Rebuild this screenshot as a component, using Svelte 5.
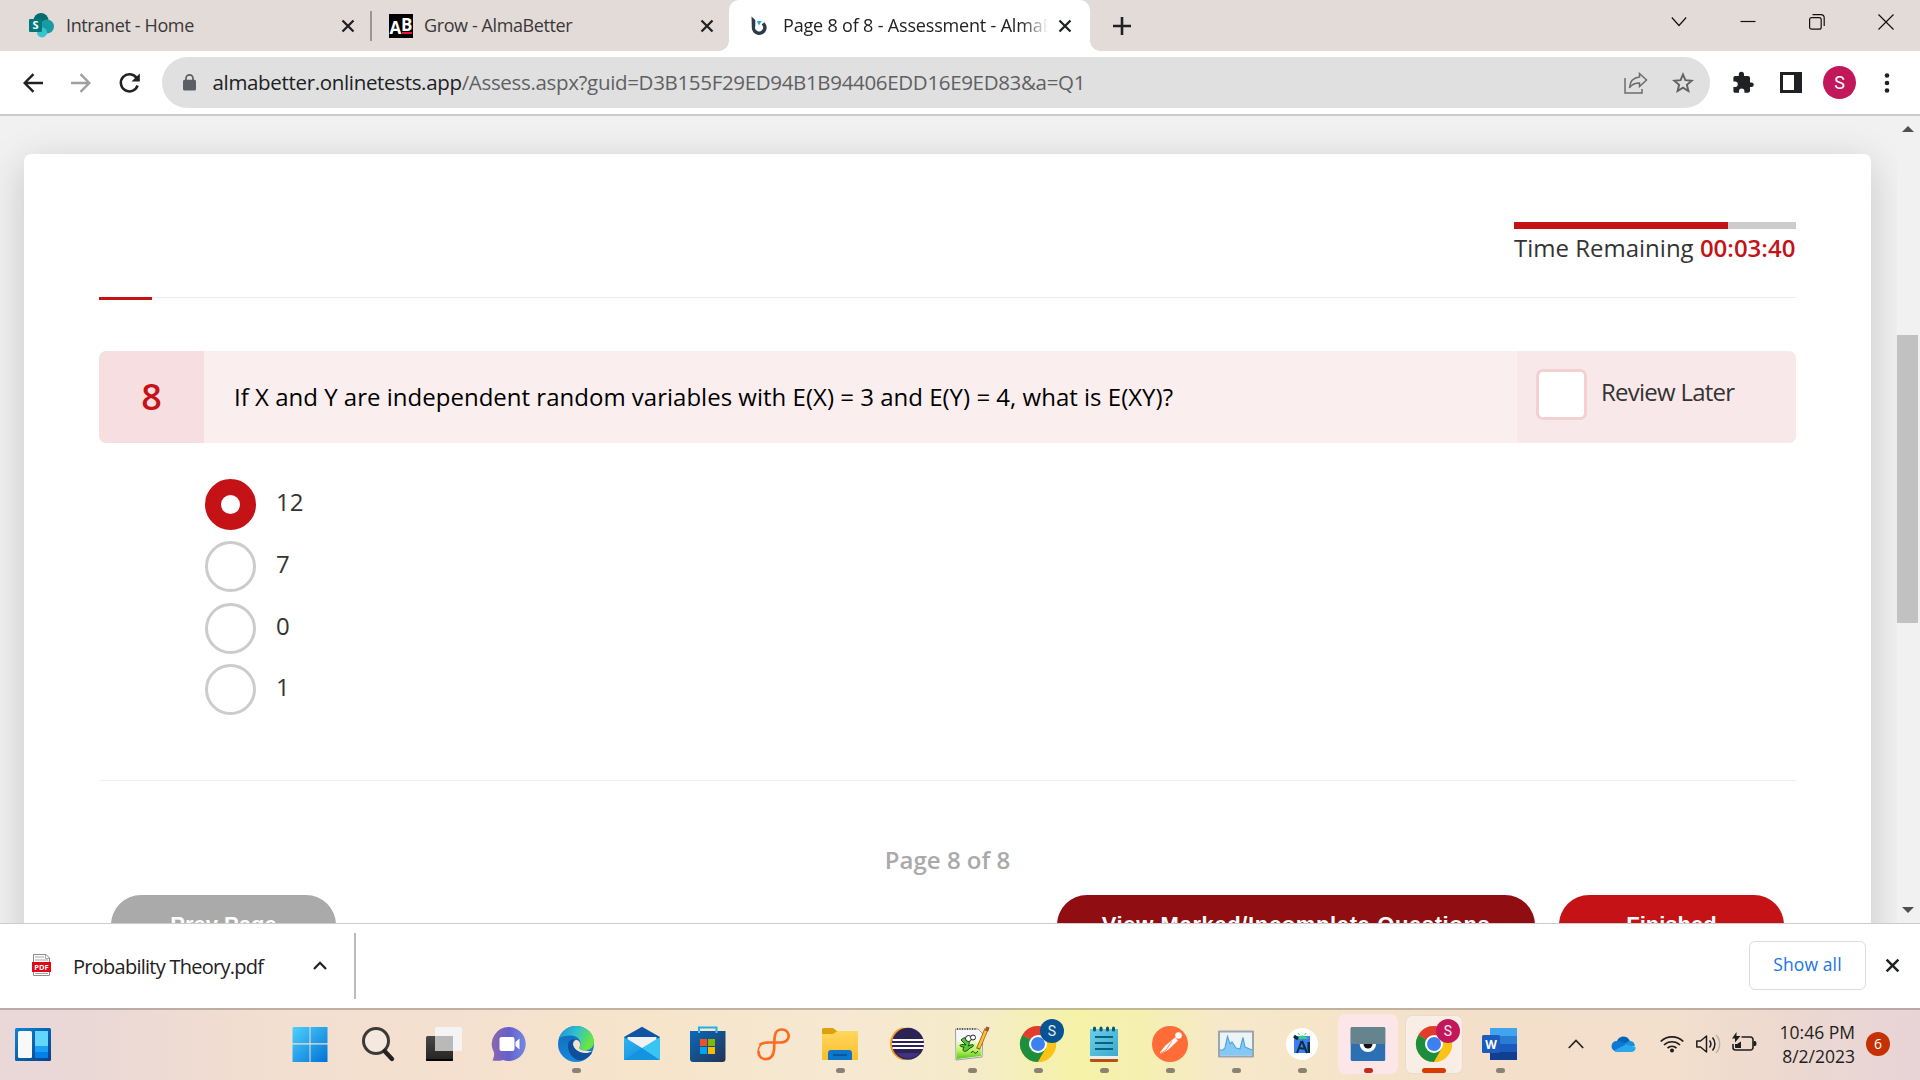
<script>
  const options = [
    { label: '12', checked: true },
    { label: '7', checked: false },
    { label: '0', checked: false },
    { label: '1', checked: false }
  ];
</script>

{#snippet cross(size)}
  <svg class="cross" width={size} height={size} viewBox="0 0 14 14"><path d="M1.5 1.5 12.5 12.5M12.5 1.5 1.5 12.5" /></svg>
{/snippet}

{#snippet chrome(letter, kind)}
  <svg class="app" viewBox="0 0 36 36">
    <circle cx="18" cy="18" r="18" fill="#fbbc05" />
    <path d="M18 18 2.4 9A18 18 0 0 1 33.6 9Z" fill="#e33b2e" />
    <path d="M18 18 2.4 9A18 18 0 0 0 18 36L25.8 22.5Z" fill="#1e8e3e" />
    <path d="M18 9H33.6A18 18 0 0 1 18 36L25.8 22.5Z" fill="#fcc314" />
    <circle cx="18" cy="18" r="9" fill="#fff" />
    <circle cx="18" cy="18" r="7" fill="#3b82f0" />
    <circle class={kind} cx="32" cy="5" r="12" />
    <text class="badge-letter" x="32" y="10" text-anchor="middle">{letter}</text>
  </svg>
{/snippet}

<div class="screen">
  <header class="tabs">
    <div class="tab first">
      <svg width="25" height="25" viewBox="0 0 25 25">
        <circle cx="12" cy="7.5" r="7.5" fill="#036c70" />
        <circle cx="18" cy="13.5" r="7" fill="#1a9ba1" />
        <circle cx="13" cy="19.5" r="5" fill="#37c6d0" />
        <rect y="6" width="13" height="13" rx="1" fill="#03787c" />
        <text class="sp" x="3.4" y="16.2">S</text>
      </svg>
      <span class="tab-title t1">Intranet - Home</span>
      {@render cross(14)}
    </div>
    <div class="tab second">
      <svg width="24" height="24" viewBox="0 0 24 24">
        <rect width="24" height="24" fill="#000" />
        <text class="ab" x="0.5" y="20">A</text>
        <text class="ab" x="12" y="16.5">B</text>
        <rect x="13" y="18" width="10" height="2" fill="#e5173f" />
      </svg>
      <span class="tab-title t2">Grow - AlmaBetter</span>
      {@render cross(14)}
    </div>
    <div class="tab active">
      <svg width="16" height="19" viewBox="0 0 16 19">
        <path d="M.5.5 4.3 4v6a4 4 0 1 0 6.4-1.6l2.6-2.2A7.4 7.4 0 1 1 .8 11.5Z" fill="#2d3a4a" />
        <path d="M5.8 5h4.8L8 9.5Z" fill="#1ba7e8" />
      </svg>
      <span class="tab-title t3">Page 8 of 8 - Assessment - AlmaBetter</span>
      {@render cross(14)}
    </div>
    <svg class="plus" width="18" height="18" viewBox="0 0 18 18"><path d="M9 0V18M0 9H18" stroke="#1f2124" stroke-width="2.6" /></svg>
    <div class="window-controls">
      <svg width="16" height="16" viewBox="0 0 16 16"><path d="M.8 3.5 8 11.5 15.2 3.5" /></svg>
      <svg width="16" height="16" viewBox="0 0 16 16"><path d="M.5 7.5H15.5" /></svg>
      <svg width="16" height="16" viewBox="0 0 16 16"><rect x=".6" y="3.6" width="11.6" height="11.6" rx="2" /><path d="M3.5.6H12a3.2 3.2 0 0 1 3.2 3.2V12" /></svg>
      <svg width="16" height="16" viewBox="0 0 16 16"><path d="M.5.5 15.5 15.5M15.5.5.5 15.5" /></svg>
    </div>
  </header>

  <nav class="toolbar">
    <div class="nav-icons">
      <svg width="20" height="20" viewBox="0 0 20 20"><path d="M20 10H2M10.5 1.2 1.7 10l8.8 8.8" fill="none" stroke="#1f2124" stroke-width="2.4" /></svg>
      <svg width="20" height="20" viewBox="0 0 20 20"><path d="M0 10H18M9.5 1.2 18.3 10l-8.8 8.8" fill="none" stroke="#a0a0a0" stroke-width="2.4" /></svg>
      <svg width="21" height="20" viewBox="0 0 21 20"><path d="M17.6 5A8.6 8.6 0 1 0 18.6 12.5" fill="none" stroke="#1f2124" stroke-width="2.5" /><path d="M20.8.5V8.5H12.5Z" fill="#1f2124" /></svg>
    </div>
    <div class="omnibox">
      <svg width="13" height="17" viewBox="0 0 13 17"><rect y="5.8" width="13" height="10.7" rx="1.5" fill="#5b5e62" /><path d="M3 6.5V4.3a3.5 3.5 0 0 1 7 0V6.5" fill="none" stroke="#5b5e62" stroke-width="1.7" /></svg>
      <span class="url"><b>almabetter.onlinetests.app</b>/Assess.aspx?guid=D3B155F29ED94B1B94406EDD16E9ED83&amp;a=Q1</span>
      <svg class="share" width="24" height="22" viewBox="0 0 24 22"><path d="M1 6V21H18V17M15.5 1.5 22.5 8 15.5 14.5V11C10.5 11 7.5 12.5 5.5 16 6 9.5 9.5 5.5 15.5 5Z" fill="none" stroke="#6a6c6e" stroke-width="1.5" /></svg>
      <svg class="star" width="22" height="22" viewBox="0 0 22 22"><path d="M11 2.5 13.4 8.1 19.7 8.7 14.9 12.8 16.4 19 11 15.7 5.6 19 7.1 12.8 2.3 8.7 8.6 8.1Z" fill="none" stroke="#5f6164" stroke-width="1.9" /></svg>
    </div>
    <div class="actions">
      <svg width="22" height="22" viewBox="0 0 22 22"><path d="M18.5 11H17V6.5c0-1.1-.9-2-2-2H11V3a2.6 2.6 0 0 0-5.2 0V4.5H2.2C1.1 4.5.4 5.3.4 6.4V10H2a2.8 2.8 0 0 1 0 5.6H.4V19.5c0 1 .8 1.8 1.8 1.8H6V19.8a2.7 2.7 0 0 1 5.4 0V21.3H15c1.1 0 2-.8 2-1.9V15.5h1.5a2.25 2.25 0 0 0 0-4.5Z" fill="#1f2124" transform="translate(0 -.6)" /></svg>
      <svg width="22" height="21" viewBox="0 0 22 21"><path d="M0 0H22V21H0ZM3 3V18H14V3Z" fill="#1f2124" fill-rule="evenodd" /></svg>
      <span class="avatar">S</span>
      <svg width="6" height="22" viewBox="0 0 6 22"><g fill="#1f2124"><circle cx="3" cy="3.5" r="2.3" /><circle cx="3" cy="11" r="2.3" /><circle cx="3" cy="18.5" r="2.3" /></g></svg>
    </div>
  </nav>

  <main class="page">
    <section class="card">
      <div class="timer">
        <div class="timer-bar"><i></i></div>
        <div class="timer-text">Time Remaining <b>00:03:40</b></div>
      </div>
      <div class="rule"><i></i></div>
      <div class="question">
        <div class="number">8</div>
        <div class="prompt"><span>If X and Y are independent random variables with E(X) = 3 and E(Y) = 4, what is E(XY)?</span></div>
        <div class="review"><i></i><span>Review Later</span></div>
      </div>
      <div class="options">
        {#each options as option}
          <div class="option"><i class:checked={option.checked}></i><span>{option.label}</span></div>
        {/each}
      </div>
      <div class="rule bottom"></div>
      <div class="pager">Page 8 of 8</div>
      <div class="buttons">
        <div class="button gray"><span>Prev Page</span></div>
        <div class="button dark"><span>View Marked/Incomplete Questions</span></div>
        <div class="button red"><span>Finished</span></div>
      </div>
    </section>
    <aside class="scrollbar">
      <svg width="12" height="6" viewBox="0 0 12 6"><path d="M0 6 6 0 12 6Z" fill="#505050" /></svg>
      <div class="thumb"></div>
      <svg width="12" height="6" viewBox="0 0 12 6"><path d="M0 0H12L6 6Z" fill="#505050" /></svg>
    </aside>
  </main>

  <section class="downloads">
    <svg class="pdf" width="19" height="22" viewBox="0 0 19 22">
      <path d="M1.5.5H14L17.5 4V21.5H1.5Z" fill="#fff" stroke="#8b8b8b" />
      <path d="M3 3H12M3 6H16M3 19.5H16M13.5 1V4.5H17" stroke="#a5a5a5" fill="none" />
      <rect y="8" width="19" height="10" fill="#e30613" />
      <text x="2.3" y="15.7">PDF</text>
    </svg>
    <span class="file">Probability Theory.pdf</span>
    <svg class="caret" width="14" height="9" viewBox="0 0 14 9"><path d="M1 8 7 1.8 13 8" fill="none" stroke="#1f2124" stroke-width="2.2" /></svg>
    <i class="divider"></i>
    <div class="show-all">Show all</div>
    {@render cross(15)}
  </section>

  <footer class="taskbar">
    <svg class="widgets" width="36" height="33" viewBox="0 0 36 33">
      <defs>
        <linearGradient id="wg" x1="0" y1="0" x2="1" y2="1"><stop stop-color="#0a84dc" /><stop offset="1" stop-color="#0c3f86" /></linearGradient>
        <linearGradient id="win" x1="0" y1="0" x2="1" y2="1"><stop stop-color="#4fd0ff" /><stop offset="1" stop-color="#0072d4" /></linearGradient>
        <linearGradient id="dk" x1="0" y1="0" x2="0" y2="1"><stop stop-color="#494848" /><stop offset="1" stop-color="#242322" /></linearGradient>
        <linearGradient id="ch" x1="0" y1="0" x2="1" y2="0"><stop stop-color="#8b67ad" /><stop offset=".5" stop-color="#6460cc" /><stop offset="1" stop-color="#7488e4" /></linearGradient>
        <linearGradient id="ed" x1="0" y1="0" x2="1" y2=".4"><stop stop-color="#1b8fd8" /><stop offset=".5" stop-color="#30bfd0" /><stop offset="1" stop-color="#6be542" /></linearGradient>
        <linearGradient id="eb" x1="0" y1="0" x2="0" y2="1"><stop stop-color="#1268b4" /><stop offset="1" stop-color="#1588e0" /></linearGradient>
        <linearGradient id="st" x1="0" y1="0" x2="1" y2="1"><stop stop-color="#0a6abb" /><stop offset="1" stop-color="#243355" /></linearGradient>
        <linearGradient id="ml" x1="0" y1="0" x2="1" y2="1"><stop stop-color="#31b4f0" /><stop offset="1" stop-color="#0f86dc" /></linearGradient>
        <linearGradient id="fo" x1="0" y1="0" x2="0" y2="1"><stop stop-color="#ffd75e" /><stop offset="1" stop-color="#fcbd2c" /></linearGradient>
        <linearGradient id="np" x1="0" y1="0" x2="1" y2="1"><stop stop-color="#6ccfe8" /><stop offset="1" stop-color="#38a9cd" /></linearGradient>
        <linearGradient id="gr" x1="0" y1="0" x2="0" y2="1"><stop stop-color="#f5ffe0" /><stop offset=".55" stop-color="#bdf060" /><stop offset="1" stop-color="#4fc71b" /></linearGradient>
      </defs>
      <rect width="36" height="33" rx="1.5" fill="url(#wg)" />
      <rect x="3" y="3" width="14" height="27" rx="1.5" fill="#f8f8f8" />
      <path d="M20 3H33V18H20Z" fill="#62d6fc" /><path d="M20 18H33V24H20Z" fill="#18a0f8" /><path d="M20 24H33V30H20Z" fill="#0680e8" />
    </svg>

    <div class="apps">
      <div class="cell"><svg class="app" viewBox="0 0 36 36"><path d="M1.5 1H17.5V17.3H.5V2ZM18.5 1H35.5V17.3H18.5ZM.5 18.5H17.5V36H.5ZM18.5 18.5H35.5V36H18.5Z" fill="url(#win)" /></svg></div>
      <div class="cell"><svg class="app" viewBox="0 0 36 36"><circle cx="18" cy="15" r="12.5" fill="#f5e8df" stroke="#3a3a3a" stroke-width="3" /><path d="M26.5 25 34 33" stroke="#222" stroke-width="4.4" stroke-linecap="round" /></svg></div>
      <div class="cell"><svg class="app" viewBox="0 0 36 36"><rect y="10" width="27" height="25" rx="1.5" fill="url(#dk)" /><path d="M0 33H27V34a1 1 0 0 1-1 1H1a1 1 0 0 1-1-1Z" fill="#050505" /><rect x="9" y="1" width="27" height="24" rx="1.5" fill="#f4f4f4" /><path d="M9 10H27V25H9Z" fill="#b9b9b9" /></svg></div>
      <div class="cell"><svg class="app" viewBox="0 0 36 36"><path d="M17.5 1A17 17 0 1 1 11 34C8 35 4 35 .5 34.5 2 31 2.5 29 1.8 26A17 17 0 0 1 17.5 1Z" fill="url(#ch)" /><rect x="7.5" y="11" width="15" height="14" rx="2" fill="#fff" /><path d="M23.5 16 27.5 12.5V23.5L23.5 20Z" fill="#fff" /></svg></div>
      <div class="cell"><svg class="app" viewBox="0 0 36 36"><circle cx="18" cy="18" r="18" fill="url(#eb)" /><path d="M1 12C4 4 11 0 18 0 28 0 36 7 36 15.5 36 21 32 24.5 27 24.5 23 24.5 20.5 23 21.5 21 24 17 22 10 13 9.5 8 9.3 4 10.5 1 12Z" fill="url(#ed)" /><path d="M10 20C10 28 16 34 22 34.5 27 34 31 31 33.8 27 34 26.5 33.5 26 33 26.3 27 29 17 26 15 19 14 15.5 16 13.5 17 13 12 13 10 16 10 20Z" fill="#104f9b" /><path d="M15 19C15 15 17.5 13.5 19 14 22 15.5 23 18 21.5 21 20.5 23 23 24.5 27 24.5L33.8 25.5C27 29 17 26 15 19Z" fill="#f5e3cf" /><path d="M15 19C16 25 24 29 33 26.5L31 30C24 35 11 29 12 17Z" fill="#104f9b" /></svg><i class="dot"></i></div>
      <div class="cell"><svg class="app" viewBox="0 0 36 36"><path d="M0 11 18 .8 36 11V20H0Z" fill="#0e56a5" /><path d="M3.5 11H32.5V20L18 26 3.5 20Z" fill="#f1f1f3" /><path d="M0 11 18 22 36 34H0Z" fill="url(#ml)" /><path d="M36 11 18 22 36 34Z" fill="#38c5f4" /><path d="M0 34 18 22 36 34Z" fill="#1394e0" /></svg></div>
      <div class="cell"><svg class="app" viewBox="0 0 36 36"><path d="M9 7V1.5H26.5V7" fill="none" stroke="#1fb0ee" stroke-width="2" /><path d="M0 5H35.5V33a3 3 0 0 1-3 3H3a3 3 0 0 1-3-3Z" fill="url(#st)" /><path d="M9 5V7M26.5 5V7" stroke="#4cc2f3" stroke-width="2" /><path d="M10 13H17V20H10Z" fill="#f25022" /><path d="M18 13H25V20H18Z" fill="#7fba00" /><path d="M10 21H17V28H10Z" fill="#00a4ef" /><path d="M18 21H25V28H18Z" fill="#ffb900" /></svg></div>
      <div class="cell"><svg class="app" viewBox="0 0 36 36"><path d="M3.5 19C6 17 9 16.5 12 16.5H24C30 16.5 33.5 13 32.5 8.5 31 2.5 21 1 19 9 18 14 18.5 19 18 24 17.5 30 14 33.5 9 33 4 33 2 28 3 25" fill="none" stroke="#fb6b20" stroke-width="2.7" /><path d="M12 16.5C5 16.5 1.5 21 2.5 27" fill="none" stroke="#fb6b20" stroke-width="1.5" /></svg></div>
      <div class="cell"><svg class="app" viewBox="0 0 36 36"><path d="M0 3.5Q0 2 1.5 2H11L15 5H36V14H0Z" fill="#dda10d" /><path d="M0 8H11L15.5 5H36V34H0Z" fill="url(#fo)" /><path d="M6 34V27a3 3 0 0 1 3-3H27a3 3 0 0 1 3 3V34Z" fill="#0b77c9" /><path d="M11 29H25" stroke="#0a4c8c" stroke-width="1.5" /></svg><i class="dot"></i></div>
      <div class="cell"><svg class="app" viewBox="0 0 36 36"><path d="M14 1.5A17 17 0 0 0 14 34L17 34A20 20 0 0 1 17 2Z" fill="#f7982a" /><circle cx="20" cy="17.8" r="16" fill="#2c2255" /><path d="M8 27a16 16 0 0 0 24 0Z" fill="#42327b" /><path d="M4.5 14H35.5M4 18H36M4.5 22H35.5" stroke="#fff" stroke-width="2.2" /></svg></div>
      <div class="cell"><svg class="app" viewBox="0 0 36 36"><path d="M1.5 3H24L29 8 28 31 2 34Z" fill="#f8f8fa" stroke="#888" stroke-width=".8" /><path d="M3 3H22" stroke="#555" stroke-width="2" stroke-dasharray="1 1.5" /><path d="M2.5 16 27.5 14 27 30 2.5 33Z" fill="url(#gr)" /><path d="M7 14C12 8 18 16 14 20 20 17 22 20 16 22 12 27 7 26 10 21 4 21 5 17 12 19Z" fill="#55c936" stroke="#12470d" stroke-width="1" /><circle cx="14.5" cy="12.5" r="3" fill="#fff" stroke="#222" /><circle cx="19" cy="11.5" r="2.5" fill="#fff" stroke="#222" /><path d="M17 27C20 22 20 31 24 25" fill="none" stroke="#193b08" /><path d="M32.5 3 24 23" stroke="#8b5b10" stroke-width="4" /><path d="M32.5 3 24.5 22" stroke="#ffbd35" stroke-width="2.6" /><path d="M34 1 32.5 5" stroke="#ad4b48" stroke-width="3.5" /></svg><i class="dot"></i></div>
      <div class="cell">{@render chrome('S', 'blue-badge')}<i class="dot"></i></div>
      <div class="cell"><svg class="app" viewBox="0 0 36 36"><rect x="4" y="24" width="28" height="12" rx="1.5" fill="#b5520e" /><path d="M4 3H32V31H4Z" fill="url(#np)" /><path d="M4 30H32V33H4Z" fill="#e8eef0" /><path d="M8.5 2V4M15 2V4M21.5 2V4M27.5 2V4" stroke="#0c5470" stroke-width="3" stroke-linecap="round" /><path d="M9 11H27M9 17H27M9 23H27" stroke="#096182" stroke-width="1.8" /></svg><i class="dot"></i></div>
      <div class="cell"><svg class="app" viewBox="0 0 36 36"><circle cx="18" cy="18" r="18" fill="#ff6c37" /><circle cx="26.5" cy="9.5" r="3.3" fill="#fff" /><path d="M23 11.5 26 14.5 16 24 9 27.5 8 26.5 13 20Z" fill="#fff" /><path d="M20 15 14 24 9 27" stroke="#ff6c37" stroke-width=".8" fill="none" /></svg><i class="dot"></i></div>
      <div class="cell"><svg class="app" viewBox="0 0 36 36"><rect y="4.5" width="36" height="27" rx="1" fill="#9ba5ae" /><rect x="2" y="6.5" width="32" height="23" fill="#eef3f7" /><path d="M2 24H5L7 22 9 11 12 18 14 16 18 22 22 23 25 11 27 21 34 24V29.5H2Z" fill="#86c8f5" /><path d="M2 24H5L7 22 9.5 10.5 12 18 14 16 18 22 22 23 25 11.5 27 21 34 24" fill="none" stroke="#4ea7e0" stroke-width="1.2" /></svg><i class="dot"></i></div>
      <div class="cell"><svg class="app" viewBox="0 0 36 36"><circle cx="18" cy="18" r="16" fill="#fff" /><path d="M10 10H26V27H10Z" fill="#3f7df0" /><path d="M12.5 13A6 5 0 0 1 24 13Z" fill="#39cf7d" /><path d="M14 7 15.5 9M22 7 20.5 9" stroke="#39cf7d" /><path d="M10 10 14 13" stroke="#0c2737" stroke-width="3" /><path d="M17.5 15 13 27M18 15 23 27M15 22 22 23" stroke="#083042" stroke-width="2" /><rect x="23.5" y="16" width="2.5" height="11" fill="#083042" /></svg><i class="dot"></i></div>
      <div class="cell attention"><svg class="app" viewBox="0 0 36 36"><rect x=".7" y="1" width="34.5" height="34" rx="1.5" fill="#2c6fb5" /><path d="M.7 2.5Q.7 1 2.2 1H33.7Q35.2 1 35.2 2.5V18H.7Z" fill="#66848e" /><path d="M9.7 18A8.2 8 0 0 0 26.1 18Z" fill="#fff" /><path d="M13.5 18A4.5 4.5 0 0 0 22.5 18Z" fill="#151515" /></svg><i class="dot hot"></i></div>
      <div class="cell current">{@render chrome('S', 'pink-badge')}<i class="dot wide"></i></div>
      <div class="cell"><svg class="app" viewBox="0 0 36 36"><path d="M8 2H35V10H8Z" fill="#41a5ee" /><path d="M8 10H35V18H8Z" fill="#2b7cd3" /><path d="M8 18H35V26H8Z" fill="#185abd" /><path d="M8 26H35V34H8Z" fill="#103f91" /><rect y="9" width="18" height="18" rx="1.5" fill="#1b5cbe" /><text class="w" x="9" y="22.5" text-anchor="middle">W</text></svg><i class="dot"></i></div>
    </div>

    <div class="tray">
      <svg class="up" width="16" height="10" viewBox="0 0 16 10"><path d="M.8 9 8 1.5 15.2 9" fill="none" stroke="#222" stroke-width="1.7" /></svg>
      <svg class="cloud" width="24" height="16" viewBox="0 0 24 16"><path d="M5 5C7-.5 15-1.5 18 5L12 11 3 8Z" fill="#0364b8" /><path d="M4.5 15.5A5 5 0 0 1 5 5C9 4 12 7 15 9L8 15Z" fill="#0f78d4" /><path d="M16 5.5A5 5 0 0 1 22 7L23 10 15 11 12 8Z" fill="#1490df" /><path d="M2 14.5 14 8.5 23.5 11A4.5 4.5 0 0 1 20 16H5Q3 16 2 14.5Z" fill="#28a8ea" /></svg>
      <svg class="wifi" width="24" height="18" viewBox="0 0 24 18"><g fill="none" stroke="#1e1e1e" stroke-width="1.7"><path d="M.7 6.5A16 16 0 0 1 23.3 6.5" /><path d="M4 10A11.5 11.5 0 0 1 20 10" /><path d="M7.5 13A7 7 0 0 1 16.5 13" /></g><circle cx="12" cy="15.5" r="2" fill="#1e1e1e" /></svg>
      <svg class="volume" width="24" height="20" viewBox="0 0 24 20"><path d="M.8 7H4.5L10.5 2V18L4.5 13H.8Z" fill="none" stroke="#1e1e1e" stroke-width="1.5" stroke-linejoin="round" /><path d="M13.5 6.5A5.5 5.5 0 0 1 13.5 13.5M16.5 3.5A10 10 0 0 1 16.5 16.5" fill="none" stroke="#1e1e1e" stroke-width="1.5" /><path d="M20 1A13 13 0 0 1 20 19" fill="none" stroke="#b9b0a8" stroke-width="1.5" /></svg>
      <svg class="battery" width="25" height="20" viewBox="0 0 25 20"><path d="M9.5 5H18.5a2.5 2.5 0 0 1 2.5 2.5V15.5a2.5 2.5 0 0 1-2.5 2.5H3.5A2.5 2.5 0 0 1 1 15.5V12" fill="none" stroke="#1e1e1e" stroke-width="1.6" /><path d="M21.5 9H23Q24.5 9 24.5 11.5 24.5 14 23 14H21.5ZM3 15.5V12H5L9 9.5V16H3.5ZM4.5 0V4H8.5L3 10.5V6.5H0Z" fill="#1e1e1e" /></svg>
      <div class="clock"><span class="time">10:46 PM</span><span class="date">8/2/2023</span></div>
      <span class="count">6</span>
    </div>
  </footer>
</div>

<style>
  :global(body) { margin: 0; overflow: hidden; }
  .screen { width: 1920px; height: 1080px; display: flex; flex-direction: column; overflow: hidden; font-family: "Open Sans", "Noto Sans", sans-serif; background: #fff; color: #1f2124; box-sizing: border-box; }
  .screen * { box-sizing: border-box; }
  svg { display: block; flex: none; overflow: visible; }
  i { display: block; flex: none; }
  span { white-space: nowrap; }

  .tabs { height: 51px; flex: none; background: #e3dbd8; display: flex; align-items: center; }
  .tab { display: flex; align-items: center; height: 51px; flex: none; }
  .cross path { stroke: #1f2124; stroke-width: 2.3; fill: none; }
  .tab-title { font-size: 18px; color: #3a3838; flex: 1; line-height: 26px; padding-bottom: 2px; overflow: hidden; }
  .first { width: 372px; padding: 0 17px 0 29px; }
  .first::after { content: ""; width: 2px; height: 30px; background: #9c9693; margin: 0 -17px 0 15px; }
  .t1 { margin-left: 12px; letter-spacing: -0.37px; }
  .second { width: 357px; padding: 0 15px 0 17px; }
  .t2 { margin-left: 11px; letter-spacing: -0.4px; }
  .active { width: 361px; padding: 0 18px 0 22px; background: #fff; border-radius: 10px 10px 0 0; position: relative; }
  .active::before, .active::after { content: ""; position: absolute; bottom: 0; width: 10px; height: 10px; }
  .active::before { left: -10px; background: radial-gradient(circle at 0 0, transparent 9.5px, #fff 10px); }
  .active::after { right: -10px; background: radial-gradient(circle at 100% 0, transparent 9.5px, #fff 10px); }
  .t3 { margin: 0 10px 0 16px; color: #222; letter-spacing: -0.18px; -webkit-mask-image: linear-gradient(90deg, #000 calc(100% - 26px), transparent); mask-image: linear-gradient(90deg, #000 calc(100% - 26px), transparent); }
  .plus { margin-left: 23px; }
  .window-controls { margin: 0 26px 8px auto; display: flex; gap: 53px; }
  .window-controls path, .window-controls rect { fill: none; stroke: #111; stroke-width: 1.2; }
  .sp { font: 700 11px "Open Sans", sans-serif; fill: #fff; }
  .ab { font: 700 17px "Open Sans", sans-serif; fill: #fff; }

  .toolbar { height: 65px; flex: none; border-bottom: 2px solid #cbcbcb; display: flex; align-items: center; }
  .nav-icons { width: 162px; padding-left: 23px; display: flex; gap: 28px; flex: none; }
  .omnibox { width: 1548px; height: 51px; border-radius: 26px; background: #e0e0e0; display: flex; align-items: center; padding-left: 20.5px; flex: none; }
  .url { margin-left: 17px; padding-bottom: 2px; flex: 1; font-size: 20.5px; color: #5f6164; letter-spacing: -0.33px; }
  .url b { font-weight: 400; color: #202124; }
  .share { margin-right: 24px; }
  .star { margin-right: 16px; }
  .actions { display: flex; align-items: center; padding-left: 23px; flex: 1; }
  .actions > :nth-child(2) { margin-left: 25px; }
  .avatar { width: 33px; height: 33px; border-radius: 50%; background: #c2185b; color: #fff; font: 18px/33px Roboto, sans-serif; text-align: center; margin: 0 28px 0 21px; }

  .page { height: 807px; flex: none; background: #f1f1f1; display: flex; overflow: hidden; }
  .card { margin: 38px 0 0 24px; width: 1847px; height: 900px; flex: none; background: #fff; border-radius: 7px; box-shadow: 0 10px 40px rgba(0, 0, 0, .18); padding: 68px 75px 0; color: #333; font-size: 24px; line-height: 32px; }
  .timer { width: 282px; margin-left: auto; height: 75px; white-space: nowrap; }
  .timer-bar { height: 7px; background: #ccc; }
  .timer-bar i { width: 214px; height: 7px; background: #c41217; }
  .timer-text { margin-top: 3px; }
  .timer-text b { font-weight: 600; color: #c41217; }
  .rule { height: 1px; background: #ececec; }
  .rule i { width: 53px; height: 3px; background: #c41217; }
  .question { margin-top: 53px; height: 92px; display: flex; border-radius: 7px; overflow: hidden; }
  .number { width: 105px; background: #f7dee1; color: #c41217; font-size: 36px; font-weight: 600; text-align: center; line-height: 91px; }
  .prompt { width: 1313px; background: #faeeee; color: #000; padding-left: 30px; line-height: 92px; letter-spacing: 0.01px; }
  .review { flex: 1; background: #f8e8e9; display: flex; padding: 18px 0 0 19px; }
  .review i { width: 51px; height: 51px; border: 3px solid #f4d0d2; border-radius: 7px; background: #fff; }
  .review span { margin: 7px 0 0 14px; letter-spacing: -0.75px; }
  .options { margin: 36px 0 0 106px; display: flex; flex-direction: column; gap: 10.8px; height: 301px; }
  .option { display: flex; height: 51px; flex: none; }
  .option i { width: 51px; height: 51px; border-radius: 50%; border: 3px solid #ccc; }
  .option i.checked { border: 16px solid #c41217; }
  .option span { margin: 7px 0 0 20px; }
  .bottom { background: #f0f0f0; }
  .pager { margin-top: 63px; text-align: center; color: #aaa; font-weight: 600; height: 51px; }
  .buttons { display: flex; padding: 0 12px; }
  .button { height: 60px; border-radius: 30px; color: #fff; font: 700 22px/60px "Liberation Sans", Arial, sans-serif; text-align: center; }
  .gray { width: 225px; background: #aaa; margin-right: auto; }
  .dark { width: 478px; background: #900d12; letter-spacing: 0.62px; }
  .red { width: 225px; background: #c41217; margin-left: 24px; }
  .scrollbar { width: 23px; margin-left: 26px; padding-top: 10px; display: flex; flex-direction: column; background: #f1f1f1; }
  .scrollbar svg { margin-left: 5px; }
  .thumb { width: 21px; height: 288px; background: #c1c1c1; margin: 203px 0 284px; flex: none; }

  .downloads { height: 85px; flex: none; border-top: 1px solid #ccc; background: #fff; display: flex; align-items: center; padding: 0 20px 2px 32px; }
  .pdf text { font: 700 7.5px "Open Sans", sans-serif; fill: #fff; }
  .file { margin: 2px 0 0 22px; width: 240px; font-size: 20px; letter-spacing: -0.74px; }
  .divider { width: 2px; height: 66px; background: #bbb; margin: 2px 0 0 27px; }
  .show-all { margin-left: auto; width: 117px; height: 49px; border: 1px solid #dadce0; border-radius: 6px; color: #1a73e8; font-size: 17.5px; line-height: 45px; letter-spacing: 0.1px; text-align: center; margin-right: 19px; }

  .taskbar { height: 72px; flex: none; border-top: 2px solid rgba(120, 110, 105, .42); background: linear-gradient(90deg, #ead8d9 0, #ead8d6 90px, #f3dfcf 280px, #f5e0cf 460px, #f6e5cb 650px, #f6e8d2 850px, #f5ecc8 980px, #f5f2a8 1075px, #f5f0b0 1140px, #f6e9c9 1220px, #f4dfca 1480px, #f3dfcc 1680px, #ecd8d0 1790px, #e8d4d7 1920px); display: flex; align-items: center; padding-bottom: 2px; }
  .widgets { margin-left: 15px; }
  .apps { margin-left: 226px; display: flex; height: 68px; flex: none; }
  .cell { width: 66px; height: 68px; display: flex; align-items: center; justify-content: center; position: relative; }
  .cell:nth-child(3) { margin-left: 2px; }
  .app { width: 36px; height: 36px; position: relative; }
  .dot { position: absolute; left: 29px; top: 58px; width: 9px; height: 5px; border-radius: 3px; background: #8a8275; }
  .hot { background: #c42b1c; }
  .wide { left: 21px; width: 24px; background: #da3b01; }
  .attention::before { content: ""; position: absolute; left: 3px; top: 4px; width: 60px; height: 60px; border-radius: 7px; background: #fde6e7; }
  .current::before { content: ""; position: absolute; left: 5px; top: 6px; width: 56px; height: 57px; border-radius: 6px; background: #f9eee5; box-shadow: 0 0 0 1px #eadbcd; }
  .blue-badge { fill: #075394; }
  .pink-badge { fill: #c2185b; }
  .badge-letter { font: 14px Roboto, sans-serif; fill: #e5edf5; }
  .w { font: 700 12px "Open Sans", sans-serif; fill: #fff; }
  .tray { margin-left: auto; padding-right: 30px; display: flex; align-items: center; height: 68px; }
  .cloud { margin-left: 28px; }
  .wifi { margin-left: 24px; }
  .volume { margin-left: 12px; }
  .battery { margin: -4px 0 0 12px; }
  .clock { width: 98px; font-size: 17.5px; line-height: 24px; display: flex; flex-direction: column; align-items: flex-end; color: #1e1e1e; margin-top: -1px; }
  .count { margin-left: 11px; width: 24px; height: 24px; border-radius: 50%; background: #c53102; color: #fff; font-size: 14px; line-height: 23px; text-align: center; }
</style>
